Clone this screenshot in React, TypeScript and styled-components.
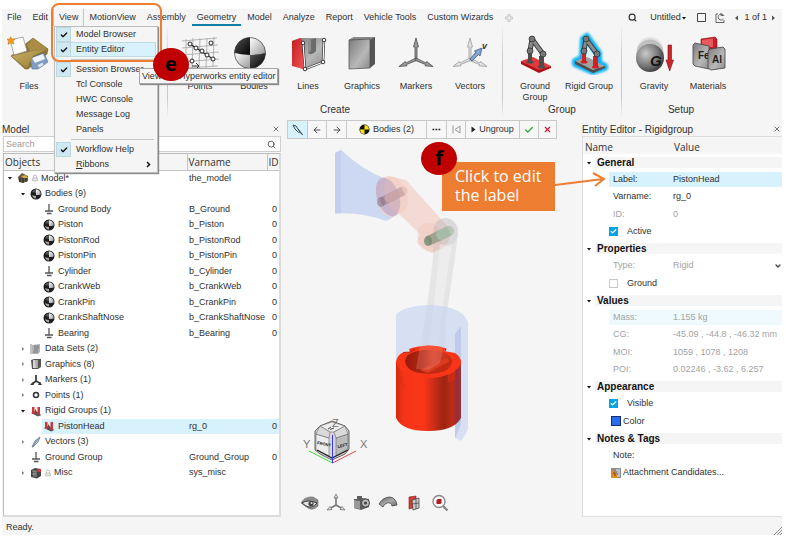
import React from "react";
import styled, { createGlobalStyle, css } from "styled-components";
import { Search, X, Check, ArrowLeft, ArrowRight, ChevronDown } from "lucide-react";

const sans = `"Liberation Sans", Arial, sans-serif`;
const humanist = `"Open Sans", "Noto Sans", sans-serif`;
const accent = "#ed7d31";
const highlight = "#d8f2fd";

const GlobalStyle = createGlobalStyle`
  * { box-sizing: border-box; }
  body { margin: 0; background: #fff; color: #303030; font: 9px/11px ${sans}; }
  button, input, select { font: inherit; color: inherit; }
  button { background: none; border: 0; padding: 0; }
  svg { display: block; flex: none; }
`;

const Page = styled.div`
  min-height: 100vh;
  padding: 9px 3px 1px 2px;
  display: flex;
`;
const AppWindow = styled.div`
  flex: 1;
  display: flex;
  flex-direction: column;
  background: #f5f5f5;
  min-width: 0;
`;

/* ---------- menu bar ---------- */
const MenuBar = styled.nav`
  display: flex;
  align-items: stretch;
  gap: 1px;
  height: 17px;
`;
const MenuButton = styled.button<{ $active?: boolean; $open?: boolean }>`
  height: 17px;
  padding: 2px 5px 0;
  white-space: nowrap;
  border-bottom: 2px solid ${(p) => (p.$active ? "#0f7fa6" : "transparent")};
  ${(p) => p.$open && css`box-shadow: -1px 0 #c4c4c4, 1px 0 #c4c4c4;`}
`;
const MenuAnchor = styled.div`
  position: relative;
`;
const MenuRight = styled.div`
  margin-left: auto;
  padding-right: 3px;
  display: flex;
  align-items: center;
`;
const BarButton = styled.button<{ $w?: number }>`
  display: flex;
  align-items: center;
  justify-content: center;
  white-space: nowrap;
  min-width: ${(p) => p.$w ?? 16}px;
`;
const AddTab = styled.button`
  padding: 0 6px;
  display: flex;
  align-items: center;
`;

const Dropdown = styled.div`
  position: absolute;
  z-index: 3;
  left: 0;
  top: 17px;
  width: 104px;
  background: #f5f5f5;
  border: 1px solid #bdbdbd;
  padding: 0 1px;
  box-shadow: 1px 1px 1px #8a8a8a;
`;
const DropItem = styled.button<{ $hot?: boolean }>`
  display: flex;
  align-items: center;
  width: 100%;
  height: 15px;
  text-align: left;
  gap: 5px;
  padding-right: 5px;
  ${(p) => p.$hot && css`background: ${highlight}; box-shadow: inset 0 0 0 1px #bcd9e4;`}
`;
const DropCheck = styled.span<{ $on?: boolean }>`
  width: 15px;
  height: 15px;
  display: grid;
  place-items: center;
  color: #111;
  ${(p) => p.$on && css`background: #cfe9f3; box-shadow: inset 0 0 0 1px #c0d7df;`}
`;
const DropText = styled.span`
  flex: 1;
  white-space: nowrap;
`;
const DropLine = styled.hr`
  margin: 2px 2px 2px 15px;
  border: 0;
  height: 1px;
  background: #c6c6c6;
`;
const Frame = styled.div`
  position: absolute;
  z-index: 4;
  left: -3px;
  top: -6px;
  width: 111px;
  height: 59px;
  border: 2px solid ${accent};
  border-radius: 8px;
  pointer-events: none;
`;
const Tooltip = styled.div`
  position: absolute;
  z-index: 5;
  left: 85px;
  top: 59px;
  height: 16px;
  padding: 2px;
  line-height: 11px;
  white-space: nowrap;
  background: #f6f6f6;
  border: 1px solid #a6a6a6;
  box-shadow: 1px 1px 1px #8a8a8a;
`;
const Badge = styled.div<{ $x: number; $y: number }>`
  position: absolute;
  z-index: 6;
  left: ${(p) => p.$x}px;
  top: ${(p) => p.$y}px;
  width: 36px;
  height: 33px;
  border-radius: 50%;
  background: #c00000;
  color: #000;
  font: bold 20px/31px ${humanist};
  text-align: center;
`;

/* ---------- ribbon ---------- */
const Ribbon = styled.div`
  display: flex;
  height: 92px;
`;
const RibbonGroup = styled.section<{ $first?: boolean }>`
  display: flex;
  flex-direction: column;
  padding: 5px 5px 0;
  min-width: ${(p) => (p.$first ? 165 : 0)}px;
  ${(p) => p.$first && css`padding-left: 0;`}
`;
const RibbonDivider = styled.div`
  width: 1px;
  height: 90px;
  background: linear-gradient(#f0f0f0, #c9c9c9 40%, #c9c9c9 80%, #f0f0f0);
`;
const RibbonItems = styled.div`
  display: flex;
`;
const RibbonButton = styled.button`
  width: 54px;
  height: 72px;
  display: flex;
  flex-direction: column;
  align-items: center;
  gap: 6px;
  line-height: 11px;
`;
const RibbonTitle = styled.div`
  font-size: 10px;
  line-height: 14px;
  text-align: center;
`;

/* ---------- panels ---------- */
const Body = styled.main`
  flex: 1;
  display: grid;
  grid-template-columns: 279px minmax(0, 1fr) 200px;
  min-height: 401px;
`;
const Panel = styled.section`
  display: flex;
  flex-direction: column;
  padding-bottom: 2px;
  min-width: 0;
`;
const PanelHead = styled.header`
  height: 18px;
  display: flex;
  align-items: center;
  justify-content: space-between;
  font-size: 10px;
  padding: 4px 1px 0 0;
`;
const SearchBox = styled.label`
  display: flex;
  align-items: center;
  height: 16px;
  margin-left: 1px;
  padding: 0 4px 0 2px;
  background: #fff;
  border: 1px solid #cfcfcf;
  input {
    flex: 1;
    min-width: 0;
    border: 0;
    outline: 0;
    padding: 0;
    background: none;
  }
  input::placeholder { color: #9a9a9a; }
`;
const TreeBox = styled.div`
  flex: 1;
  margin: 1px 0 0 1px;
  background: #fff;
  border: 1px solid #bcbcbc;
  border-right: 2px solid #dcdcdc;
  border-bottom: 2px solid #dcdcdc;
`;
const Tree = styled.table`
  width: 100%;
  border-collapse: collapse;
  table-layout: fixed;
  th {
    height: 16px;
    padding: 0 0 0 1px;
    text-align: left;
    font: 10px/14px ${humanist};
    background: #f5f5f5;
    border-bottom: 1px solid #c4c4c4;
    border-left: 1px solid #c4c4c4;
  }
  th:first-child { border-left: 0; }
  td {
    height: 15px;
    padding: 0 0 0 2px;
    white-space: nowrap;
  }
  tr:nth-child(even) td { height: 16px; }
  td:last-child { text-align: right; padding: 0 2px 0 0; }
`;
const NodeCell = styled.div<{ $depth: number }>`
  display: flex;
  align-items: center;
  height: 15px;
  margin-left: ${(p) => p.$depth * 13}px;
  gap: 3px;
`;
const TreeRow = styled.tr<{ $on?: boolean }>`
  ${(p) => p.$on && css`
    td { background: ${highlight}; }
    td:first-child { background: linear-gradient(90deg, #fff 38px, ${highlight} 38px); }
  `}
`;
const Twist = styled.span`
  width: 8px;
  display: grid;
  place-items: center;
`;

/* ---------- viewport ---------- */
const Viewport = styled.section`
  position: relative;
  display: flex;
  flex-direction: column;
  padding: 2px 0 0 1px;
  min-width: 0;
`;
const Guide = styled.div`
  display: flex;
  margin-left: 5px;
  height: 19px;
  width: max-content;
  border: 1px solid #c9c9c9;
  background: #f7f7f7;
`;
const GuideButton = styled.button<{ $w: number; $on?: boolean }>`
  width: ${(p) => p.$w}px;
  display: flex;
  align-items: center;
  justify-content: center;
  gap: 3px;
  white-space: nowrap;
  font-size: 9px;
  background: ${(p) => (p.$on ? highlight : "none")};
  & + & { border-left: 1px solid #c9c9c9; }
`;
const ViewTools = styled.div`
  display: flex;
  margin-left: 15px;
  button {
    width: 26px;
    height: 26px;
    display: grid;
    place-items: center;
  }
`;
const Callout = styled.div`
  position: absolute;
  z-index: 2;
  right: 27px;
  top: 44px;
  width: 113px;
  padding: 5px 13px 6px;
  background: ${accent};
  color: #fff;
  font: 16px/19px ${humanist};
  white-space: nowrap;
`;
const CalloutArrow = styled.svg`
  position: absolute;
  left: 100%;
  top: 8px;
`;

/* ---------- entity editor ---------- */
const EditorBox = styled.div`
  flex: 1;
  background: #fff;
  border: 1px solid #dedede;
  border-right: 0;
`;
const EditorHead = styled.div`
  display: grid;
  grid-template-columns: 89px 1fr;
  height: 17px;
  align-items: center;
  padding: 3px 0 0 2px;
  font: 10px/14px ${humanist};
  background: #f5f5f5;
`;
const Rows = styled.div`
  & > * { height: 17px; }
  & > *:nth-child(4n) { height: 18px; }
`;
const SectionRow = styled.h3`
  margin: 0;
  display: flex;
  align-items: center;
  gap: 3px;
  padding-left: 3px;
  font: bold 10px/11px ${sans};
  color: #111;
`;
const SectionName = styled.span`
  flex: 1;
  padding-left: 2px;
  background: #f5f5f5;
`;
const Field = styled.div<{ $tone?: string; $muted?: boolean }>`
  display: flex;
  align-items: center;
  margin-left: 26px;
  padding-left: 4px;
  color: ${(p) => (p.$muted ? "#a3a3a3" : "#303030")};
  background: linear-gradient(${(p) => p.$tone ?? "#fff"}, ${(p) => p.$tone ?? "#fff"}) center / 100% 15px no-repeat;
  label { width: 60px; }
  input, select, output {
    flex: 1;
    min-width: 0;
    width: 0;
    border: 0;
    outline: 0;
    padding: 0;
    background: none;
    white-space: nowrap;
    opacity: 1;
    appearance: none;
  }
`;
const CheckRow = styled.label`
  display: flex;
  align-items: center;
  gap: 9px;
  margin-left: 26px;
  input {
    appearance: none;
    display: block;
    margin: 0;
    width: 9px;
    height: 9px;
    border: 1px solid #c4c8d0;
    background: #fff;
  }
  input:checked {
    border-color: #06a3e2;
    background: #06a3e2;
  }
  span { position: relative; height: 9px; }
  svg { position: absolute; left: 1px; top: 1px; pointer-events: none; }
`;
const IconRow = styled.button`
  display: flex;
  align-items: center;
  gap: 2px;
  margin-left: 28px;
`;
const Swatch = styled.span`
  width: 10px;
  height: 10px;
  background: #2a6cf0;
  border: 1px solid #15306e;
`;
const StatusBar = styled.footer`
  display: flex;
  justify-content: space-between;
  align-items: center;
  height: 16px;
  padding-left: 4px;
`;
const Grip = styled.svg`
  align-self: flex-end;
`;
const DefsSvg = styled.svg`
  position: absolute;
`;

/* ---------- drawings ---------- */
const Big = ({ children }: { children: React.ReactNode }) => (
  <svg width="44" height="44" viewBox="0 0 44 44">{children}</svg>
);

const Gradients = () => (
  <DefsSvg width="0" height="0" aria-hidden="true">
    <defs>
      <linearGradient id="steel" x1="0" y1="0" x2="1" y2="1">
        <stop offset="0" stopColor="#5c5c5c" /><stop offset=".5" stopColor="#a9a9a9" /><stop offset="1" stopColor="#6a6a6a" />
      </linearGradient>
      <linearGradient id="plate" x1="0" y1="0" x2="1" y2="1">
        <stop offset="0" stopColor="#7c7c7c" /><stop offset=".6" stopColor="#b8b8b8" /><stop offset="1" stopColor="#8a8a8a" />
      </linearGradient>
      <linearGradient id="tan" x1="0" y1="0" x2="1" y2="1">
        <stop offset="0" stopColor="#c9b26e" /><stop offset=".5" stopColor="#b09548" /><stop offset="1" stopColor="#8a6f2e" />
      </linearGradient>
      <linearGradient id="redFace" x1="0" y1="0" x2="1" y2="1">
        <stop offset="0" stopColor="#c41a20" /><stop offset="1" stopColor="#ee5555" />
      </linearGradient>
      <radialGradient id="ball" cx=".35" cy=".35" r=".7">
        <stop offset="0" stopColor="#c9c9c9" /><stop offset=".6" stopColor="#7b7b7b" /><stop offset="1" stopColor="#3c3c3c" />
      </radialGradient>
      <linearGradient id="dark" x1="0" y1="0" x2="1" y2="1">
        <stop offset="0" stopColor="#555" /><stop offset="1" stopColor="#000" />
      </linearGradient>
      <linearGradient id="lite" x1="0" y1="0" x2="1" y2="1">
        <stop offset="0" stopColor="#fff" /><stop offset="1" stopColor="#999" />
      </linearGradient>
      <linearGradient id="piston" x1="0" y1="0" x2="1" y2="0">
        <stop offset="0" stopColor="#d42a10" /><stop offset=".12" stopColor="#f43418" /><stop offset=".42" stopColor="#fb3618" />
        <stop offset=".74" stopColor="#9c2412" /><stop offset=".86" stopColor="#c02c16" /><stop offset=".93" stopColor="#9c2c34" /><stop offset="1" stopColor="#93333e" />
      </linearGradient>
      <linearGradient id="bore" x1="0" y1="0" x2="1" y2="0">
        <stop offset="0" stopColor="#981c0c" /><stop offset=".35" stopColor="#b02410" /><stop offset=".6" stopColor="#d83c22" /><stop offset="1" stopColor="#c3301a" />
      </linearGradient>
      <filter id="glow" x="-30%" y="-30%" width="160%" height="160%"><feGaussianBlur stdDeviation="1" /></filter>
    </defs>
  </DefsSvg>
);

const FilesIcon = () => (
  <Big>
    <path d="M4 25 L26 7 L41 18 L40 23 L21 38 L18 38 Z" fill="#8d7434" stroke="#77612a" strokeWidth=".6" />
    <path d="M20 14 L26 7 L41 18 L25 24 Z" fill="#a98d45" />
    <path d="M23 27 L37 22 L41 31 L31 38 L25 38 Z" fill="#7f9cc2" stroke="#55709a" strokeWidth=".6" />
    <path d="M25 27 L36 23 L38 28 L28 32 Z" fill="#f1f4f8" />
    <path d="M30 34 L36 31 L37 34 L32 37 Z" fill="#dfe5ee" stroke="#5d7599" strokeWidth=".4" />
    <path d="M4 25 L25 20 L41 18 L26 25 L20 38 Z" fill="url(#tan)" stroke="#8a7232" strokeWidth=".4" />
    <path d="M3 9 L16 6 L20 20 L7 24 Z" fill="#fbfbfb" stroke="#8a8a8a" strokeWidth=".7" />
    <path d="M3.500 5.500 L5 8 L8 8 L6.200 10.300 L7 13 L3.800 12 L1 13.500 L1.500 10.300 L0 8 L2.600 8 Z" fill="#f49a1c" stroke="#b06a10" strokeWidth=".4" />
  </Big>
);
const PointsIcon = () => (
  <Big>
    <g stroke="#a4a4a4" strokeWidth=".8" fill="none">
      <path d="M8 8 V38 M15 7 L14 38 M22 7 L21 38 M29 7 L28 38 M36 6 L35 36 M4 10 L39 7 M4 17 L40 14 M4 24 L41 21 M4 31 L41 28 M6 37 L40 35" />
    </g>
    <path d="M12 13 L35 28" stroke="#222" strokeWidth="1.200" />
    <g fill="#fff" stroke="#222" strokeWidth="1">
      <circle cx="12" cy="13" r="2" /><circle cx="18" cy="17" r="2" /><circle cx="24" cy="20" r="2" /><circle cx="29" cy="24" r="2" /><circle cx="35" cy="28" r="2" /><circle cx="33" cy="12" r="2" /><circle cx="14" cy="30" r="2" />
    </g>
    <path d="M14 35 H21 M18 32 L21 35 L18 38" stroke="#333" fill="none" />
  </Big>
);
const BodiesIcon = () => (
  <Big>
    <circle cx="18" cy="22" r="15.500" fill="#777" />
    <path d="M18 24 V6.500 A15.500 15.500 0 0 0 2.500 22 Q10 24 18 24 Z" fill="url(#dark)" />
    <path d="M18 24 V6.500 A15.500 15.500 0 0 1 33.500 22 Q26 24 18 24 Z" fill="url(#lite)" />
    <path d="M18 24 Q10 24 2.500 22 A15.500 15.500 0 0 0 18 37.500 Z" fill="url(#lite)" />
    <path d="M18 24 Q26 24 33.500 22 A15.500 15.500 0 0 1 18 37.500 Z" fill="url(#dark)" />
    <circle cx="18" cy="22" r="15.500" fill="none" stroke="#333" strokeWidth=".6" />
  </Big>
);
const LinesIcon = () => (
  <Big>
    <path d="M6 10 L14 7 L36 7 L38 9 L37 31 L19 38 L15 38 Z" fill="url(#plate)" />
    <path d="M22 9 L30 7 V20 Q26 25 22 22 Z" fill="#6b6b6b" /><path d="M22 9 L25 8 V20 L22 22 Z" fill="#8f8f8f" />
    <path d="M6 10 L15 7 L17 12 L17 38 L6 35 Z" fill="url(#redFace)" />
    <path d="M17 12 L19 38 L37 31 L38 9" stroke="#222" strokeWidth="2.400" fill="none" />
    <path d="M17 12 L19 38 L37 31 L38 9" stroke="#fff" strokeWidth="1.200" fill="none" />
    <g fill="#fff" stroke="#222" strokeWidth=".9"><circle cx="17" cy="12" r="1.800" /><circle cx="38" cy="9" r="1.800" /><circle cx="37" cy="31" r="1.800" /><circle cx="19" cy="38" r="1.800" /></g>
  </Big>
);
const GraphicsIcon = () => (
  <Big>
    <path d="M9 9 L14 6 L35 6 L35 33 L30 37 Z" fill="#555" />
    <path d="M9 9 L14 6 L35 6 L30 9 Z" fill="#8b8b8b" />
    <path d="M9 9 L30 8 L30 37 L9 38 Z" fill="url(#plate)" stroke="#4a4a4a" strokeWidth=".7" />
  </Big>
);
const Triad = ({ tone, fill }: { tone: string; fill: string }) => (
  <g stroke={tone} strokeWidth=".8" fill={fill} strokeLinejoin="round">
    <path d="M21 29 V16 H19.500 L22 7 L24.500 16 H23 V29 Z" />
    <path d="M22 27 L12 32 L11.300 30.500 L5 35.500 L13 34.800 L12.500 33.500 L22.500 29.500 Z" />
    <path d="M22 27 L32 32 L32.700 30.500 L39 35.500 L31 34.800 L31.500 33.500 L21.500 29.500 Z" />
  </g>
);
const MarkersIcon = () => <Big><Triad tone="#4e4e4e" fill="#9a9a9a" /></Big>;
const VectorsIcon = () => (
  <Big>
    <Triad tone="#9c9c9c" fill="#e2e2e2" />
    <path d="M22 28 L28 21 L26.500 20 L34 17 L32 25 L30.500 23.500 L24 30 Z" fill="#7fa5d3" stroke="#3d5e8c" strokeWidth=".8" />
    <text x="34" y="18" fontSize="9" fontWeight="bold" fontStyle="italic" fill="#333">v</text>
  </Big>
);
const RobotShape = ({ base, edge, leg }: { base: string; edge: string; leg: string }) => (
  <>
    <path d="M8 30 L20 26 L38 35 L26 40 Z" fill={base} />
    <path d="M8 30 L26 39 L38 35 V37 L26 42 L8 33 Z" fill={edge} />
    <path d="M15 20 H19 V31 H15 Z M26 25 H31 V36 H26 Z" fill={leg} />
    <ellipse cx="17" cy="31" rx="3.500" ry="1.500" fill={leg} /><ellipse cx="28.500" cy="36" rx="3.500" ry="1.500" fill={leg} />
    <path d="M17 20 L19 8 L30 23" fill="none" stroke="#3e3e3e" strokeWidth="5" strokeLinecap="round" strokeLinejoin="round" />
    <path d="M17 20 L19 8 L30 23" fill="none" stroke="#8b8b8b" strokeWidth="3" strokeLinecap="round" strokeLinejoin="round" />
    <g fill="#777" stroke="#333" strokeWidth=".8"><circle cx="17" cy="20" r="3" /><circle cx="19" cy="8" r="3" /><circle cx="30" cy="23" r="3" /></g>
  </>
);
const GroundGroupIcon = () => <Big><RobotShape base="#e23a3c" edge="#ad1116" leg="#4c4c4c" /></Big>;
const RigidGroupIcon = () => (
  <Big>
    <g filter="url(#glow)" stroke="#10b4f4" strokeWidth="6" strokeLinejoin="round" fill="#10b4f4">
      <path d="M8 30 L15 27 L16 8 L20 5 L32 22 L32 32 L38 35 V37 L26 41 L8 33 Z" />
    </g>
    <path d="M19 26 L20 14 L27 24 V30 Z" fill="#d9f4fe" />
    <RobotShape base="#a0a0a0" edge="#4e4e4e" leg="#cf2226" />
  </Big>
);
const GravityIcon = () => (
  <Big>
    <circle cx="18" cy="19" r="13" fill="#cfcfcf" opacity=".5" /><circle cx="18" cy="22" r="13.500" fill="#a8a8a8" opacity=".6" />
    <circle cx="18" cy="27" r="14" fill="url(#ball)" />
    <text x="18" y="35" fontSize="15" fontWeight="bold" fontStyle="italic" fill="#151515">G</text>
    <path d="M36 14 H39.500 V29 H41.500 L37.700 40 L34 29 H36 Z" fill="#c9272b" stroke="#7c1013" strokeWidth=".6" />
  </Big>
);
const MaterialsIcon = () => (
  <Big>
    <path d="M15 8 L29 6 L31 8 V20 L15 22 Z" fill="#c4222a" stroke="#8e1218" strokeWidth=".6" />
    <path d="M16 9 L27 7.500 V16 H16 Z" fill="#e85a5c" />
    <path d="M7 14 L9 12 L23 15 V38 L9 35 L7 33 Z" fill="url(#plate)" stroke="#454545" strokeWidth=".8" />
    <text x="12" y="28" fontSize="10" fontWeight="bold" fill="#1d1d1d">Fe</text>
    <path d="M22 20 L24 18 L37 16 L39 18 V37 L25 39 L22 37 Z" fill="url(#plate)" stroke="#3f3f3f" strokeWidth=".8" />
    <text x="26" y="32" fontSize="10" fontWeight="bold" fill="#1d1d1d">Al</text>
  </Big>
);

const Small = ({ children }: { children: React.ReactNode }) => (
  <svg width="12" height="12" viewBox="0 0 12 12">{children}</svg>
);
const treeIcons: Record<string, React.ReactNode> = {
  model: <Small><path d="M1 5 L5 1 L11 4 L11 9 L6 11 L2 10 Z" fill="#655741" /><path d="M3 6 V10 M6 5 V11 M9 5 V10" stroke="#222" /><path d="M4 4 L9 3 L11 6 L6 6 Z" fill="#d8a94a" /></Small>,
  body: <Small><circle cx="6" cy="6" r="5.500" fill="#1d1d1d" /><path d="M6 1.300 A4.700 4.700 0 0 1 10.700 6.500 Q8 7.200 6 7 Z" fill="url(#lite)" /><path d="M6 8 Q4 8 2 7.300 A4.500 4.500 0 0 0 6 10.500 Z" fill="#a5a5a5" /><path d="M6 1.300 A4.700 4.700 0 0 0 2 4 L6 5 Z" fill="#555" /></Small>,
  ground: <Small><path d="M6 1 V8 M2 8 H10 M4 10.500 H8.500" stroke="#555" strokeWidth="1.300" fill="none" /></Small>,
  data: <Small><path d="M2 2 L10 1 V9 L8 11 L2 11 Z" fill="#b5b5b5" /><path d="M1 1 V11 M4 3 H9 M4 5 H9 M4 7 H8 M3 9 H8" stroke="#666" strokeWidth=".8" fill="none" /></Small>,
  graphics: <Small><path d="M1 2 L4 1 H11 V9 L8 11 H2 Z" fill="#555" /><path d="M3 2 H8 V10 H3 Z" fill="#d4d4d4" /><path d="M5 2 H8 V10 H6 Z" fill="#aaa" /></Small>,
  markers: <Small><path d="M6 1 V7 L2 10 M6 7 L10.500 9.500" stroke="#3a3a3a" strokeWidth="1.800" fill="none" /><path d="M0 11 L4 11 L2.500 8.500 Z M12 11 L8 11 L10 8 Z" fill="#333" /></Small>,
  points: <Small><circle cx="6" cy="6" r="2.500" fill="#fff" stroke="#333" strokeWidth="1.500" /></Small>,
  rigid: <Small><path d="M1 8 L4 6 L11.500 10 L8 11.500 Z" fill="#555" /><path d="M2 2 H4.500 V9 H2 Z M7.500 2 H10 V10 H7.500 Z" fill="#d43436" /><path d="M5 4 L8 8 H5 Z" fill="#6d4444" /></Small>,
  vectors: <Small><path d="M2 11 L5 5 L10 1 L8 6 L3 11 Z" fill="#cfdcec" stroke="#5f6f84" strokeWidth=".8" /><path d="M3 10 L8 3" stroke="#4471a8" strokeWidth=".8" /></Small>,
  misc: <Small><path d="M1 3 L5 1 L11 2 V9 L7 11.500 L1 10 Z" fill="#444" /><path d="M2 4 H6 V10 M2 7 H6 M4 4 V10" stroke="#aaa" strokeWidth=".8" fill="none" /><path d="M7 2 H11 V5 H7 Z" fill="#d4343a" /></Small>,
};
const Lock = () => (
  <svg width="6" height="8" viewBox="0 0 6 8"><path d="M1.500 4 V2.500 A1.500 1.500 0 0 1 4.500 2.500 V4" fill="none" stroke="#b4b4b4" strokeWidth=".9" /><path d="M.5 4 H5.500 V7 H.5 Z" fill="#e3e3e3" stroke="#b4b4b4" strokeWidth=".6" /></svg>
);
const Caret = ({ open = true }: { open?: boolean }) => (
  <svg width="6" height="6" viewBox="0 0 6 6">
    {open ? <path d="M1 2 H5 L3 4.500 Z" fill="#111" /> : <path d="M2 1 L4.300 3 L2 5 Z" fill="#8a8a8a" />}
  </svg>
);

const Scene = () => (
  <svg width="293" height="351" viewBox="0 0 293 351" role="img" aria-label="Slider crank assembly">
    <path d="M53 14 L59 11 Q80 31 106 41 Q121 54 118 68 Q112 80 104 82 Q80 73 53 74.500 Z" fill="#cdd8f2" />
    <path d="M53 14 L59 11 V74 L53 74.500 Z" fill="#c3cfec" />
    <path d="M93 52 Q95 38 107 37 L124 41 L168 90 Q170 104 158 111 L150 114 Q138 110 135 103 L138 95 L117 75 Q108 82 99 72 Z" fill="#f3d0c8" opacity=".75" />
    <ellipse cx="106" cy="58" rx="11" ry="20" fill="#b3a3c4" opacity=".65" transform="rotate(-18 106 58)" />
    <ellipse cx="114" cy="56" rx="11" ry="19" fill="#f0bdb0" opacity=".3" transform="rotate(-18 114 56)" />
    <ellipse cx="148" cy="98" rx="12" ry="15" fill="#f0bdb0" opacity=".3" transform="rotate(-25 148 98)" />
    <path d="M99 63 L121 52" stroke="#8d7088" strokeWidth="9" opacity=".5" />
    <path d="M107 59 L121 52" stroke="#e0b4ae" strokeWidth="9" strokeLinecap="round" opacity=".55" />
    <ellipse cx="99" cy="63" rx="4" ry="5" fill="#8e7180" opacity=".5" />
    <path d="M151 92 Q151 80 164 79 Q177 82 176 96 L173 118 L164 180 L163 212 H138 L146 160 L151 120 Z" fill="#b9b9b9" opacity=".25" />
    <path d="M158 105 L170 105 Q160 165 156 210 L146 210 L152 165 Z" fill="#fff" opacity=".3" />
    <ellipse cx="164" cy="93" rx="12" ry="14" fill="#aeaeae" opacity=".2" />
    <path d="M146 102 L167 92" stroke="#8a947f" strokeWidth="10" opacity=".75" />
    <path d="M159 96 L167 92" stroke="#aac3ae" strokeWidth="10" strokeLinecap="round" opacity=".8" />
    <ellipse cx="146" cy="102" rx="4" ry="5" fill="#6f8c70" opacity=".8" />
    <path d="M114 175 Q125 166 150 166 Q181 168 186 183 V290 Q182 299 179 302 L173 299 V225 H114 Z" fill="#c5d2f0" opacity=".62" />
    <path d="M173 195 L179 187 V285 L173 299 Z" fill="#a9b8e0" opacity=".5" />
    <path d="M114 222 V279 Q120 292 146 292 Q172 292 179 279 V222 Z" fill="url(#piston)" />
    <path d="M114 223 Q115 216 121 213.500 L128 213 L127 210 Q134 207 146 206.500 Q157 206.500 164 209.500 L162 212 L173 214 Q179 218 179 223 Q179 228 173 231 V240 L166 243 V235.500 Q158 239 146 239 Q118 238 114 223 Z" fill="#f93518" />
    <path d="M123 222 Q124 214 136 212 Q146 209.500 158 212 Q169 215 170 222 Q169 234 146 235 Q124 234 123 222 Z" fill="url(#bore)" />
    <path d="M142 233 L163 220 L170 221 Q170 228 163 232 Q154 235 146 235 Z" fill="#c22a12" />
    <path d="M138 231 L146 234 L168 222 L164 219 Z" fill="#d93c20" />
    <path d="M134 230 L138 207 L162 207 L158 224 L147 231 Z" fill="#f3b7ac" opacity=".22" />
    <path d="M121 213.500 L128 213 L133 210 M163 212 L164 209.500" stroke="#b3230f" strokeWidth="1.200" fill="none" />
    <path d="M166 236 V243 L173 240 V232 Z" fill="#c92c14" />
    <path d="M119 238 Q119 246 123 248" stroke="#d62c13" fill="none" />
    <path d="M38 287 L50 282 L63 287 L67 292 V310 L63 315 L50 321 L38 315 L33 311 V292 Z" fill="#d6d6d6" stroke="#444" strokeWidth=".8" />
    <path d="M38 287 L50 283 L63 287 L52 293 H48 Z" fill="#ededed" stroke="#555" strokeWidth=".5" />
    <path d="M34 295 L47 299 V317 L34 311 Z" fill="#ececec" stroke="#555" strokeWidth=".5" />
    <path d="M54 299 L66 295 V310 L54 317 Z" fill="#bcbcbc" stroke="#555" strokeWidth=".5" />
    <path d="M34 295 L38 287 L48 293 L47 299 Z M66 295 L63 287 L52 293 L54 299 Z" fill="#dadada" stroke="#555" strokeWidth=".5" />
    <path d="M35 311 L50 319 L66 311" stroke="#222" strokeWidth="1.200" fill="none" />
    <g fontSize="4" fontWeight="bold" fill="#111"><text x="35" y="305" transform="rotate(12 35 305)">FRONT</text><text x="56" y="309" transform="rotate(-14 56 309)">LEFT</text></g>
    <path d="M46 290 L49 288 M48 290.500 L52 289" stroke="#333" strokeWidth=".9" />
    <path d="M50.500 324 L27 312" stroke="#38e038" /><path d="M50.500 324 L74 312" stroke="#f0404a" /><path d="M50.500 324 V296" stroke="#3a3aff" />
    <g fontSize="11" fill="#777"><text x="78" y="309">X</text><text x="21" y="309">Y</text><text x="50" y="288">Z</text></g>
  </svg>
);

const Tool = ({ children }: { children: React.ReactNode }) => (
  <svg width="20" height="20" viewBox="0 0 20 20">{children}</svg>
);
const viewTools: [string, React.ReactNode][] = [
  ["Visibility", <Tool><path d="M1 10 Q5 3 13 4 L18 7 V13 Q13 18 8 15 Z" fill="#8a8a8a" stroke="#666" strokeWidth=".6" /><path d="M2 10 Q8 6 17 10 Q12 16 6 13 Z" fill="#e2e2e2" stroke="#333" strokeWidth=".9" /><circle cx="11" cy="10.500" r="2.600" fill="#444" /><circle cx="11.500" cy="10" r="1" fill="#ddd" /></Tool>],
  ["Axes", <Tool><path d="M10 12 V4 M10 12 L3 16 M10 12 L17 16" stroke="#777" strokeWidth="1.600" fill="none" /><path d="M10 1 L12 5 H8 Z M1 17 L6 16.500 L4 13.500 Z M19 17 L14 16.500 L16 13.500 Z" fill="#ddd" stroke="#666" strokeWidth=".7" /></Tool>],
  ["Camera", <Tool><path d="M2 6 L5 6 V3 H10 V5 L17 6 V14 L9 17 L2 15 Z" fill="#5c5c5c" /><path d="M2 7 L8 8 V16 L2 15 Z" fill="#999" /><circle cx="13.500" cy="10" r="4" fill="#bbb" stroke="#444" /><circle cx="13.500" cy="10" r="1.600" fill="#444" /></Tool>],
  ["Surface", <Tool><path d="M1 11 Q5 4 12 4 Q18 5 19 12 L14 13 Q13 9 9 10 Q6 11 5 14 Z" fill="url(#steel)" stroke="#333" strokeWidth=".7" /></Tool>],
  ["Sections", <Tool><path d="M5 4 L12 3 V14 L5 16 Z" fill="#d83a32" stroke="#8c1a16" strokeWidth=".6" /><path d="M8 7 L15 5 V15 L9 17 Z" fill="#ccc" stroke="#444" strokeWidth=".8" /><path d="M12 6 V16 M8.500 11 L15 10" stroke="#444" strokeWidth=".8" /></Tool>],
  ["Zoom", <Tool><path d="M12 12 L17.500 17.500" stroke="#888" strokeWidth="2.400" /><circle cx="9" cy="8.500" r="6" fill="#f7f7f7" stroke="#888" strokeWidth="1.300" /><path d="M6.500 7 L8 6 H11.500 V9.500 L10.500 11 H6.500 Z" fill="#b01c1c" /></Tool>],
];

/* ---------- data ---------- */
type Node = { depth: number; icon: string; name: string; v?: string; id?: boolean; tw?: "open" | "closed"; lock?: boolean; on?: boolean };
const b = (name: string, v: string, icon = "body"): Node => ({ depth: 2, icon, name, v, id: true });
const nodes: Node[] = [
  { depth: 0, icon: "model", name: "Model*", v: "the_model", tw: "open", lock: true },
  { depth: 1, icon: "body", name: "Bodies (9)", tw: "open" },
  b("Ground Body", "B_Ground", "ground"),
  b("Piston", "b_Piston"),
  b("PistonRod", "b_PistonRod"),
  b("PistonPin", "b_PistonPin"),
  b("Cylinder", "b_Cylinder", "ground"),
  b("CrankWeb", "b_CrankWeb"),
  b("CrankPin", "b_CrankPin"),
  b("CrankShaftNose", "b_CrankShaftNose"),
  b("Bearing", "b_Bearing", "ground"),
  { depth: 1, icon: "data", name: "Data Sets (2)", tw: "closed" },
  { depth: 1, icon: "graphics", name: "Graphics (8)", tw: "closed" },
  { depth: 1, icon: "markers", name: "Markers (1)", tw: "closed" },
  { depth: 1, icon: "points", name: "Points (1)", tw: "closed" },
  { depth: 1, icon: "rigid", name: "Rigid Groups (1)", tw: "open" },
  { depth: 2, icon: "rigid", name: "PistonHead", v: "rg_0", id: true, on: true },
  { depth: 1, icon: "vectors", name: "Vectors (3)", tw: "closed" },
  { depth: 1, icon: "ground", name: "Ground Group", v: "Ground_Group", id: true },
  { depth: 1, icon: "misc", name: "Misc", v: "sys_misc", tw: "closed", lock: true },
];

const create: [string, React.ReactNode][] = [
  ["Points", <PointsIcon />], ["Bodies", <BodiesIcon />], ["Lines", <LinesIcon />],
  ["Graphics", <GraphicsIcon />], ["Markers", <MarkersIcon />], ["Vectors", <VectorsIcon />],
];
const groups: [string, [string, React.ReactNode][]][] = [
  ["Create", create],
  ["Group", [["Ground Group", <GroundGroupIcon />], ["Rigid Group", <RigidGroupIcon />]]],
  ["Setup", [["Gravity", <GravityIcon />], ["Materials", <MaterialsIcon />]]],
];

const menuEntries: ({ t: string; on?: boolean; hot?: boolean; sub?: boolean } | null)[] = [
  { t: "Model Browser", on: true }, { t: "Entity Editor", on: true, hot: true }, null,
  { t: "Session Browser", on: true }, { t: "Tcl Console" }, { t: "HWC Console" }, { t: "Message Log" }, { t: "Panels" }, null,
  { t: "Workflow Help", on: true }, { t: "Ribbons", sub: true },
];

const Section = ({ name }: { name: string }) => (
  <SectionRow><Caret /><SectionName>{name}</SectionName></SectionRow>
);
const ReadOnly = ({ id, name, value, tone }: { id: string; name: string; value: string; tone?: string }) => (
  <Field $muted $tone={tone}><label htmlFor={id}>{name}</label><output id={id}>{value}</output></Field>
);
const Tick = ({ name, on }: { name: string; on?: boolean }) => (
  <CheckRow>
    <span>
      <input type="checkbox" defaultChecked={on} />
      {on && <Check size={7} color="#fff" strokeWidth={4} />}
    </span>
    {name}
  </CheckRow>
);

export default function App() {
  return (
    <Page>
      <GlobalStyle />
      <Gradients />
      <AppWindow>
        <MenuBar>
          <MenuButton>File</MenuButton>
          <MenuButton>Edit</MenuButton>
          <MenuAnchor>
            <MenuButton $open>View</MenuButton>
            <Dropdown>
              {menuEntries.map((m, i) =>
                m ? (
                  <DropItem key={i} $hot={m.hot}>
                    <DropCheck $on={m.on}>{m.on && <Check size={8} strokeWidth={4} />}</DropCheck>
                    <DropText>{m.sub ? <><u>R</u>ibbons</> : m.t}</DropText>
                    {m.sub && <svg width="5" height="7" viewBox="0 0 5 7"><path d="M1 1 L3.500 3.500 L1 6" stroke="#111" strokeWidth="1.500" fill="none" /></svg>}
                  </DropItem>
                ) : <DropLine key={i} />
              )}
            </Dropdown>
            <Frame />
            <Tooltip role="tooltip">View the Hyperworks entity editor</Tooltip>
            <Badge $x={99} $y={39}>e</Badge>
          </MenuAnchor>
          <MenuButton>MotionView</MenuButton>
          <MenuButton>Assembly</MenuButton>
          <MenuButton $active>Geometry</MenuButton>
          <MenuButton>Model</MenuButton>
          <MenuButton>Analyze</MenuButton>
          <MenuButton>Report</MenuButton>
          <MenuButton>Vehicle Tools</MenuButton>
          <MenuButton>Custom Wizards</MenuButton>
          <AddTab aria-label="Add tab">
            <svg width="8" height="8" viewBox="0 0 8 8"><path d="M3 .5 H5 V3 H7.500 V5 H5 V7.500 H3 V5 H.5 V3 H3 Z" fill="#eee" stroke="#bbb" strokeWidth=".8" /></svg>
          </AddTab>
          <MenuRight>
            <BarButton $w={28} aria-label="Search"><Search size={9} strokeWidth={3} /></BarButton>
            <BarButton $w={44}>Untitled<Caret /></BarButton>
            <BarButton $w={22} aria-label="Single page"><svg width="9" height="9" viewBox="0 0 9 9"><path d="M.5 .5 H8.500 V8.500 H.5 Z" fill="none" stroke="#444" /></svg></BarButton>
            <BarButton $w={16} aria-label="Restore"><svg width="10" height="10" viewBox="0 0 10 10"><path d="M3 1 H1 V9.500 H9 V7 M9 3 A3 3 0 1 0 8.500 6 M6 0 V2.500 H8" fill="none" stroke="#555" strokeWidth=".9" /></svg></BarButton>
            <BarButton $w={16} aria-label="Previous page"><svg width="5" height="6" viewBox="0 0 5 6"><path d="M4 .5 V5.500 L1 3 Z" fill="#555" /></svg></BarButton>
            <span>1 of 1</span>
            <BarButton $w={12} aria-label="Next page"><svg width="5" height="6" viewBox="0 0 5 6"><path d="M1 .5 V5.500 L4 3 Z" fill="#555" /></svg></BarButton>
          </MenuRight>
        </MenuBar>

        <Ribbon>
          <RibbonGroup $first>
            <RibbonItems><RibbonButton><FilesIcon />Files</RibbonButton></RibbonItems>
          </RibbonGroup>
          {groups.map(([title, items]) => (
            <React.Fragment key={title}>
              <RibbonDivider />
              <RibbonGroup>
                <RibbonItems>
                  {items.map(([label, icon]) => <RibbonButton key={label}>{icon}{label}</RibbonButton>)}
                </RibbonItems>
                <RibbonTitle>{title}</RibbonTitle>
              </RibbonGroup>
            </React.Fragment>
          ))}
        </Ribbon>

        <Body>
          <Panel>
            <PanelHead>Model<button aria-label="Close model browser"><X size={8} strokeWidth={2} /></button></PanelHead>
            <SearchBox><input placeholder="Search" aria-label="Search model" /><Search size={9} strokeWidth={2} /></SearchBox>
            <TreeBox>
              <Tree>
                <colgroup><col /><col width="80" /><col width="12" /></colgroup>
                <thead><tr><th>Objects</th><th>Varname</th><th>ID</th></tr></thead>
                <tbody>
                  {nodes.map((n) => (
                    <TreeRow key={n.name} $on={n.on}>
                      <td>
                        <NodeCell $depth={n.depth}>
                          <Twist>{n.tw && <Caret open={n.tw === "open"} />}</Twist>
                          {treeIcons[n.icon]}
                          {n.lock && <Lock />}
                          <span>{n.name}</span>
                        </NodeCell>
                      </td>
                      <td>{n.v}</td>
                      <td>{n.id ? "0" : ""}</td>
                    </TreeRow>
                  ))}
                </tbody>
              </Tree>
            </TreeBox>
          </Panel>

          <Viewport>
            <Guide>
              <GuideButton $w={19} $on aria-label="Select"><svg width="12" height="12" viewBox="0 0 12 12"><path d="M1 1 L4 2 L8 8 L6.500 8.500 L3 5 Z M6 5 L10 10 M8 8.500 L11 11" fill="none" stroke="#263c48" strokeWidth=".9" /></svg></GuideButton>
              <GuideButton $w={19} aria-label="Back"><ArrowLeft size={10} /></GuideButton>
              <GuideButton $w={20} aria-label="Forward"><ArrowRight size={10} /></GuideButton>
              <GuideButton $w={80}>
                <svg width="11" height="11" viewBox="0 0 11 11"><circle cx="5.500" cy="5.500" r="5" fill="#111" /><path d="M5.500 5.500 V1 A4.500 4.500 0 0 1 10 5.500 Z M5.500 5.500 H1 A4.500 4.500 0 0 0 5.500 10 Z" fill="#f5e614" /></svg>
                Bodies (2)
              </GuideButton>
              <GuideButton $w={20} aria-label="More"><svg width="9" height="3" viewBox="0 0 9 3"><path d="M.5 1.500 H2.300 M3.500 1.500 H5.300 M6.500 1.500 H8.300" stroke="#222" strokeWidth="1.500" /></svg></GuideButton>
              <GuideButton $w={19} aria-label="First"><svg width="9" height="9" viewBox="0 0 9 9"><path d="M1 .5 V8.500 M8 1 V8 L3 4.500 Z" fill="none" stroke="#999" /></svg></GuideButton>
              <GuideButton $w={54}><svg width="5" height="7" viewBox="0 0 5 7"><path d="M.5 .5 V6.500 L4.500 3.500 Z" fill="#222" /></svg>Ungroup</GuideButton>
              <GuideButton $w={19} aria-label="Accept"><Check size={10} color="#1fa81f" strokeWidth={3} /></GuideButton>
              <GuideButton $w={18} aria-label="Cancel"><X size={9} color="#c81430" strokeWidth={3} /></GuideButton>
            </Guide>
            <Scene />
            <ViewTools>
              {viewTools.map(([name, icon]) => <button key={name} aria-label={name}>{icon}</button>)}
            </ViewTools>
            <Callout>
              Click to edit<br />the label
              <Badge $x={-21} $y={-20}>f</Badge>
              <CalloutArrow width="52" height="20" viewBox="0 0 52 20"><path d="M0 15 L48 9 M38 3 L49 9 L40 16" fill="none" stroke={accent} strokeWidth="2" /></CalloutArrow>
            </Callout>
          </Viewport>

          <Panel>
            <PanelHead>Entity Editor - Rigidgroup<button aria-label="Close entity editor"><X size={8} strokeWidth={2} /></button></PanelHead>
            <EditorBox>
              <EditorHead><span>Name</span><span>Value</span></EditorHead>
              <Rows>
                <Section name="General" />
                <Field $tone={highlight}><label htmlFor="lbl">Label:</label><input id="lbl" defaultValue="PistonHead" /></Field>
                <Field><label htmlFor="var">Varname:</label><input id="var" defaultValue="rg_0" /></Field>
                <ReadOnly id="eid" name="ID:" value="0" />
                <Tick name="Active" on />
                <Section name="Properties" />
                <Field $muted>
                  <label htmlFor="type">Type:</label>
                  <select id="type" defaultValue="Rigid"><option>Rigid</option></select>
                  <ChevronDown size={8} color="#444" strokeWidth={4} />
                </Field>
                <Tick name="Ground" />
                <Section name="Values" />
                <ReadOnly id="mass" name="Mass:" value="1.155 kg" tone="#effafe" />
                <ReadOnly id="cg" name="CG:" value="-45.09 , -44.8 , -46.32 mm" />
                <ReadOnly id="moi" name="MOI:" value="1059 , 1078 , 1208" />
                <ReadOnly id="poi" name="POI:" value="0.02246 , -3.62 , 6.257" />
                <Section name="Appearance" />
                <Tick name="Visible" on />
                <IconRow><Swatch />Color</IconRow>
                <Section name="Notes &amp; Tags" />
                <Field><label htmlFor="note">Note:</label><input id="note" /></Field>
                <IconRow>
                  <svg width="10" height="10" viewBox="0 0 10 10"><path d="M0 0 H10 V10 H0 Z" fill="#8d8d8d" /><path d="M5 2 H9 M6 4 H9 M7 6 H9 M6 8 H9" stroke="#eee" /><path d="M0 3 L3 3 L6 7 V10 H0 Z" fill="#e58a1c" /><path d="M2 5 H4 V8" stroke="#7a4208" fill="none" /></svg>
                  Attachment Candidates...
                </IconRow>
              </Rows>
            </EditorBox>
          </Panel>
        </Body>
        <StatusBar>
          Ready.
          <Grip width="8" height="8" viewBox="0 0 8 8"><path d="M0 8 L8 0 M3 8 L8 3 M6 8 L8 6" stroke="#8a8a8a" /></Grip>
        </StatusBar>
      </AppWindow>
    </Page>
  );
}
